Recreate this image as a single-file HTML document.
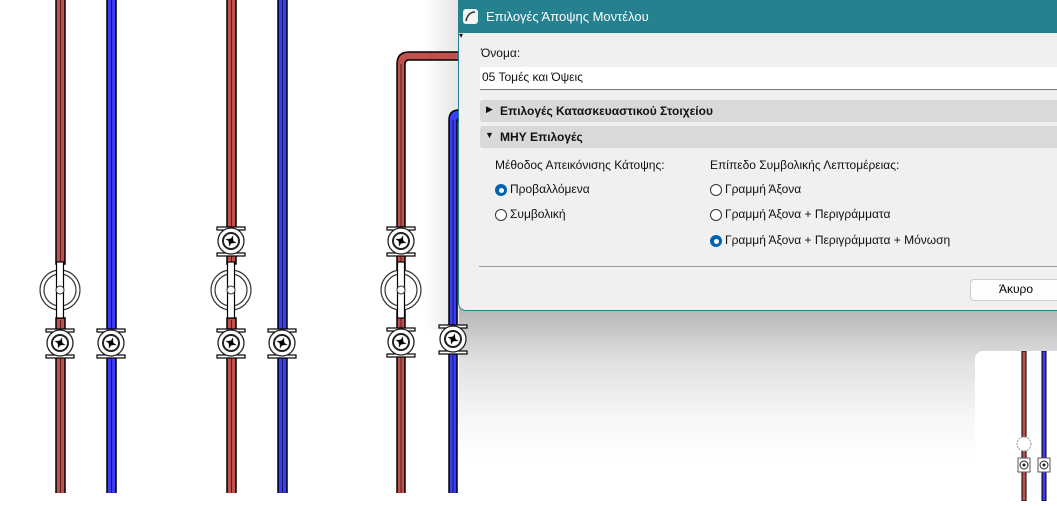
<!DOCTYPE html>
<html><head><meta charset="utf-8"><style>
body{margin:0;width:1057px;height:493px;overflow:hidden;background:#fff;position:relative;font-family:"Segoe UI","Liberation Sans","DejaVu Sans",sans-serif;}
svg.bg{position:absolute;left:0;top:0}
.shadow{position:absolute;left:459px;top:300px;width:600px;height:193px;background:linear-gradient(to bottom,rgba(0,0,0,.3) 0,rgba(0,0,0,.28) 12px,rgba(0,0,0,.12) 60px,rgba(0,0,0,.03) 120px,rgba(0,0,0,0) 160px);}
.shadowL{position:absolute;left:425px;top:0;width:34px;height:330px;background:linear-gradient(to right,rgba(0,0,0,0),rgba(0,0,0,.1));}
.dlg{position:absolute;left:458px;top:0;width:610px;height:311px;background:#f0f0f0;border:1px solid #25808f;border-radius:0 0 0 8px;box-sizing:border-box;}
.title{position:absolute;left:0;top:0;right:0;height:32px;background:#25808f;color:#fff;font-size:13px;}
.title span{position:absolute;left:27px;top:8px}
.ico{position:absolute;left:4px;top:8px;width:15px;height:15px;background:#f4f4f4;border-radius:3px}
.t{position:absolute;font-size:12px;color:#111;white-space:nowrap}
.input{position:absolute;left:21px;top:66px;width:600px;height:22px;background:#fff;border-bottom:1px solid #777;}
.hdr{position:absolute;left:21px;width:600px;height:22px;background:#d9d9d9;border-radius:3px;}
.hdr b{position:absolute;left:20px;top:4px;font-size:12px;color:#111}
.rad{position:absolute;width:12px;height:12px;border-radius:50%;border:1px solid #333;background:#fff;box-sizing:border-box}
.rad.on{background:#0063b1;border:none}
.rad.on:after{content:"";position:absolute;left:4px;top:4px;width:5px;height:5px;border-radius:50%;background:#fff}
.sep{position:absolute;left:20px;top:265px;width:600px;height:1px;background:#999}
.btn{position:absolute;left:511px;top:278px;width:90px;height:20px;background:#fdfdfd;border:1px solid #ccc;border-radius:4px;font-size:12px;text-align:center;line-height:19px}
.win{position:absolute;left:975px;top:351px;width:90px;height:150px;background:#fff;border-radius:8px 0 0 0}
</style></head><body>
<div class="shadowL"></div>
<div class="shadow"></div>
<svg class="bg" width="1057" height="493" viewBox="0 0 1057 493">
<defs>
<g id="v"><rect x="-14" y="-14" width="28" height="3" fill="#fff" stroke="#000" stroke-width="1.2"/><rect x="-14" y="12" width="28" height="3" fill="#fff" stroke="#000" stroke-width="1.2"/><circle r="13" fill="#fff" stroke="#222" stroke-width="1.3"/><circle r="8" fill="none" stroke="#222" stroke-width="2"/><path d="M0,-6 L2,-1 6,0 1,2 0,6 -2,1 -6,0 -1,-2Z" fill="#111" transform="rotate(20)"/><circle r="2.5" fill="#000"/></g>
<g id="c"><circle r="20" fill="#fff" stroke="#333" stroke-width="1.2"/><circle r="16" fill="none" stroke="#333" stroke-width="1.2"/><rect x="-3.5" y="-28" width="7" height="56" fill="#fff" stroke="#000" stroke-width="1.2"/><circle r="4" fill="#fff" stroke="#333"/></g>
</defs>
<g stroke="#000" stroke-width="1.5">
<rect x="56" y="-2" width="9" height="266" fill="#c0504d"/><rect x="56" y="318" width="9" height="180" fill="#c0504d"/>
<rect x="107" y="-2" width="9" height="500" fill="#3c3cf5"/>
<rect x="227" y="-2" width="9" height="266" fill="#c0504d"/><rect x="227" y="318" width="9" height="180" fill="#c0504d"/>
<rect x="278" y="-2" width="9" height="500" fill="#3c3cf5"/>
<path d="M397,498 V64 Q397,52 409,52 H470 V60 H409 Q405,60 405,64 V498Z" fill="#c0504d"/>
<path d="M449,498 V120 Q449,110 459,110 H470 V118 H461 Q457,118 457,122 V498Z" fill="#3c3cf5"/>
</g>
<g stroke="#000" stroke-width="0.6">
<line x1="60.5" y1="0" x2="60.5" y2="262"/><line x1="60.5" y1="320" x2="60.5" y2="493"/><line x1="111.5" y1="0" x2="111.5" y2="493"/>
<line x1="231.5" y1="0" x2="231.5" y2="262"/><line x1="231.5" y1="320" x2="231.5" y2="493"/><line x1="282.5" y1="0" x2="282.5" y2="493"/>
<line x1="401" y1="64" x2="401" y2="493"/><line x1="453" y1="120" x2="453" y2="493"/>
</g>
<use href="#c" x="60" y="290"/><use href="#v" x="60" y="343"/><use href="#v" x="111" y="343"/>
<use href="#v" x="231" y="241"/><use href="#c" x="231" y="290"/><use href="#v" x="231" y="343"/><use href="#v" x="282" y="343"/>
<use href="#v" x="401" y="241"/><use href="#c" x="401" y="290"/><use href="#v" x="401" y="342"/><use href="#v" x="453" y="339"/>
</svg>
<div class="win"><svg width="90" height="150"><g stroke="#000" stroke-width="1"><rect x="47" y="0" width="4" height="150" fill="#c0504d"/><rect x="67" y="0" width="4" height="150" fill="#3c3cf5"/></g><circle cx="49" cy="93" r="7" fill="#fff" stroke="#999" stroke-dasharray="2 1"/><rect x="43" y="107" width="12" height="14" fill="#fff" stroke="#555"/><rect x="63" y="107" width="12" height="14" fill="#fff" stroke="#555"/><circle cx="49" cy="114" r="4" fill="none" stroke="#222"/><circle cx="69" cy="114" r="4" fill="none" stroke="#222"/><circle cx="49" cy="114" r="1.5" fill="#222"/><circle cx="69" cy="114" r="1.5" fill="#222"/></svg></div>
<div class="dlg">
<div class="title"><div class="ico"><svg width="15" height="15"><path d="M3,12 Q5,3 12,3" fill="none" stroke="#333" stroke-width="1.6"/></svg></div><span>Επιλογές Άποψης Μοντέλου</span></div>
<div class="t" style="left:0;top:30px;font-size:8px">▾</div>
<div class="t" style="left:22px;top:45px">Όνομα:</div>
<div class="input"><div class="t" style="left:2px;top:3px">05 Τομές και Όψεις</div></div>
<div class="hdr" style="top:99px"><span class="t" style="left:6px;top:4px;font-size:9px">▶</span><b>Επιλογές Κατασκευαστικού Στοιχείου</b></div>
<div class="hdr" style="top:125px"><span class="t" style="left:5px;top:4px;font-size:9px">▼</span><b>ΜΗΥ Επιλογές</b></div>
<div class="t" style="left:36px;top:157px">Μέθοδος Απεικόνισης Κάτοψης:</div>
<div class="t" style="left:251px;top:157px">Επίπεδο Συμβολικής Λεπτομέρειας:</div>
<div class="rad on" style="left:36px;top:183px"></div><div class="t" style="left:51px;top:181px">Προβαλλόμενα</div>
<div class="rad" style="left:36px;top:208px"></div><div class="t" style="left:51px;top:206px">Συμβολική</div>
<div class="rad" style="left:251px;top:183px"></div><div class="t" style="left:266px;top:181px">Γραμμή Άξονα</div>
<div class="rad" style="left:251px;top:208px"></div><div class="t" style="left:266px;top:206px">Γραμμή Άξονα + Περιγράμματα</div>
<div class="rad on" style="left:251px;top:234px"></div><div class="t" style="left:266px;top:232px">Γραμμή Άξονα + Περιγράμματα + Μόνωση</div>
<div class="sep"></div>
<div class="btn">Άκυρο</div>
</div>
</body></html>
